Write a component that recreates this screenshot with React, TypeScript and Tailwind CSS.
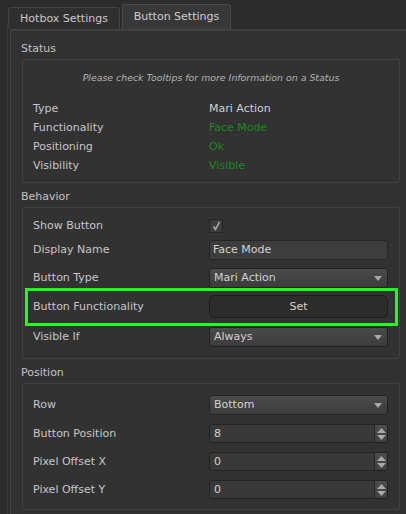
const Label = ({ children }: { children: React.ReactNode }) => (
  <div className="w-[176px] shrink-0 text-[#c6c6c6]">{children}</div>
)

const Arrow = () => (
  <svg width="8" height="5" viewBox="0 0 8 5" className="ml-auto mr-[5px]">
    <path d="M0 0 H8 L4 5 Z" fill="#a8a8a8" />
  </svg>
)

const Combo = ({ value }: { value: string }) => (
  <div className="w-[179px] h-[20px] flex items-center pl-[4px] rounded-[3px] border border-[#222] bg-gradient-to-b from-[#4a4a4a] to-[#3c3c3c] text-[#d2d2d2]">
    <span>{value}</span>
    <Arrow />
  </div>
)

const Spin = ({ value }: { value: string }) => (
  <div className="w-[179px] h-[19px] flex rounded-[3px] border border-[#222] bg-[#393939] text-[#d2d2d2] overflow-hidden">
    <div className="flex-1 flex items-center pl-[4px]">{value}</div>
    <div className="w-[13px] flex flex-col items-center justify-center gap-[2px] border-l border-[#262626] bg-gradient-to-b from-[#4c4c4c] to-[#404040]">
      <svg width="9" height="5" viewBox="0 0 9 5">
        <path d="M0 5 H9 L4.5 0 Z" fill="#a8a8a8" />
      </svg>
      <svg width="9" height="5" viewBox="0 0 9 5">
        <path d="M0 0 H9 L4.5 5 Z" fill="#a8a8a8" />
      </svg>
    </div>
  </div>
)

const Title = ({ children }: { children: React.ReactNode }) => (
  <div className="h-[24px] pt-[7px] pl-[10px] leading-[14px] text-[#c2c2c2]">{children}</div>
)

export default function App() {
  return (
    <div className="relative w-[406px] h-[514px] overflow-hidden bg-[#2c2c2c] font-['DejaVu_Sans',sans-serif] text-[11px] leading-[14px]">
      <div className="absolute left-[7px] top-[23px] bottom-0 w-px bg-[#3a3a3a]" />

      <div className="relative flex items-end h-[29px] pl-[8px]">
        <div className="w-[112px] h-[22px] flex items-center justify-center rounded-t-[3px] border border-b-0 border-[#424242] bg-[#2f2f2f] text-[#c8c8c8]">
          Hotbox Settings
        </div>
        <div className="ml-[2px] w-[109px] h-[25px] flex items-center justify-center rounded-t-[3px] border border-b-0 border-[#4a4a4a] bg-[#383838] text-[#cfcfcf]">
          Button Settings
        </div>
      </div>

      <div className="relative ml-[10px] h-[485px] border-l border-t-2 border-[#404040] bg-[#323232]">
        <div className="h-[11px]" />
        <div className="h-[14px] pl-[10px] leading-[14px] text-[#c2c2c2]">Status</div>
        <div className="h-[3px]" />
        <div className="ml-[11px] w-[378px] border border-[#414141] rounded-[2px] pt-[11px] pb-[7px] pl-[10px]">
          <div className="h-[14px] text-center pr-[10px] italic text-[9.4px] text-[#b4b4b4]">
            Please check Tooltips for more Information on a Status
          </div>
          <div className="h-[14px]" />
          <div className="h-[19px] flex items-center">
            <Label>Type</Label>
            <span className="text-[#d0d0d0]">Mari Action</span>
          </div>
          <div className="h-[19px] flex items-center">
            <Label>Functionality</Label>
            <span className="text-[#1c8a1c]">Face Mode</span>
          </div>
          <div className="h-[19px] flex items-center">
            <Label>Positioning</Label>
            <span className="text-[#1c8a1c]">Ok</span>
          </div>
          <div className="h-[19px] flex items-center">
            <Label>Visibility</Label>
            <span className="text-[#1c8a1c]">Visible</span>
          </div>
        </div>

        <Title>Behavior</Title>
        <div className="relative ml-[11px] w-[378px] border border-[#414141] rounded-[2px] pt-[10px] pb-[11px] pl-[10px]">
          <div className="h-[16px] flex items-center">
            <Label>Show Button</Label>
            <div className="w-[14px] h-[14px] flex items-center justify-center border border-[#262626] bg-[#3b3b3b]">
              <svg width="9" height="10" viewBox="0 0 9 10">
                <path d="M1.5 5.5 L3.5 8.5 L7.5 1" stroke="#a4a4a4" strokeWidth="1.6" fill="none" />
              </svg>
            </div>
          </div>
          <div className="mt-[6px] h-[20px] flex items-center">
            <Label>Display Name</Label>
            <div className="w-[179px] h-[20px] flex items-center pl-[3px] rounded-[3px] border border-[#262626] bg-[#3d3d3d] text-[#d2d2d2]">
              Face Mode
            </div>
          </div>
          <div className="mt-[8px] h-[20px] flex items-center">
            <Label>Button Type</Label>
            <Combo value="Mari Action" />
          </div>
          <div className="mt-[7px] h-[23px] flex items-center">
            <Label>Button Functionality</Label>
            <div className="w-[179px] h-[23px] flex items-center justify-center rounded-[5px] border border-[#1c1c1c] bg-[#2c2c2c] text-[#d2d2d2]">
              Set
            </div>
          </div>
          <div className="mt-[9px] h-[20px] flex items-center">
            <Label>Visible If</Label>
            <Combo value="Always" />
          </div>
          <div className="absolute left-[2px] top-[80px] w-[373px] h-[38px] border-[3px] border-[#1eff1e]" />
        </div>

        <Title>Position</Title>
        <div className="ml-[11px] w-[378px] border border-[#414141] rounded-[2px] pt-[11px] pb-[10px] pl-[10px]">
          <div className="h-[20px] flex items-center">
            <Label>Row</Label>
            <Combo value="Bottom" />
          </div>
          <div className="mt-[9px] h-[19px] flex items-center">
            <Label>Button Position</Label>
            <Spin value="8" />
          </div>
          <div className="mt-[9px] h-[19px] flex items-center">
            <Label>Pixel Offset X</Label>
            <Spin value="0" />
          </div>
          <div className="mt-[9px] h-[19px] flex items-center">
            <Label>Pixel Offset Y</Label>
            <Spin value="0" />
          </div>
        </div>
      </div>
    </div>
  )
}
